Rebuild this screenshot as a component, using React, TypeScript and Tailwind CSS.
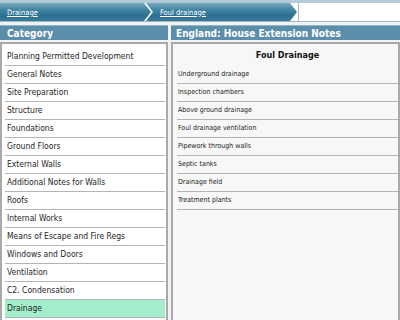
import React from 'react';

const categories = [
  'Planning Permitted Development',
  'General Notes',
  'Site Preparation',
  'Structure',
  'Foundations',
  'Ground Floors',
  'External Walls',
  'Additional Notes for Walls',
  'Roofs',
  'Internal Works',
  'Means of Escape and Fire Regs',
  'Windows and Doors',
  'Ventilation',
  'C2. Condensation',
  'Drainage',
];

const notes = [
  'Underground drainage',
  'Inspection chambers',
  'Above ground drainage',
  'Foul drainage ventilation',
  'Pipework through walls',
  'Septic tanks',
  'Drainage field',
  'Treatment plants',
];

const segBg = 'bg-[linear-gradient(to_bottom,#79abc2_0%,#4586a4_35%,#2c6f90_70%,#377a99_100%)]';

export default function App() {
  return (
    <div className="w-[400px] h-[320px] overflow-hidden bg-[#f2f2f2] font-['DejaVu_Sans_Condensed','Liberation_Sans',sans-serif]">
      {/* Breadcrumbs */}
      <div className="bg-[#b3cbd6] pt-[3px]">
        <div className="flex h-[19px] bg-white border-b border-[#9fb8c4]">
          <div className={`w-[151px] h-full flex items-center pl-[7px] pt-[1px] ${segBg} [clip-path:polygon(0_0,calc(100%-7px)_0,100%_50%,calc(100%-7px)_100%,0_100%)]`}>
            <a href="#" className="text-[7.5px] text-white underline leading-none">Drainage</a>
          </div>
          <div className={`-ml-[5px] w-[151px] h-full flex items-center pl-[14px] pt-[1px] ${segBg} [clip-path:polygon(0_0,calc(100%-7px)_0,100%_50%,calc(100%-7px)_100%,0_100%,7px_50%)]`}>
            <a href="#" className="text-[7.5px] text-white underline leading-none">Foul drainage</a>
          </div>
          <div className="flex-1 ml-[1px] border-l border-[#9fb8c4]" />
        </div>
      </div>

      <div className="flex gap-[3px] pt-[3px]">
        {/* Category column */}
        <div className="w-[168px] flex flex-col">
          <div className="h-[15px] bg-[#5b8eaa] border-t border-[#8fb6c9] flex items-center pl-[7px] text-white font-bold text-[10px]">
            Category
          </div>
          <div className="mt-[2px] h-[300px] bg-white border-2 border-[#a9a9a9] pt-[4px] pl-[3px] pr-[1px]">
            {categories.map((c) => (
              <div
                key={c}
                className={`h-[18px] flex items-center pl-[2px] border-b border-[#b4b4b4] text-[8.5px] text-[#1e1e1e] ${c === 'Drainage' ? 'bg-[#a3efcb]' : ''}`}
              >
                {c}
              </div>
            ))}
          </div>
        </div>

        {/* Notes column */}
        <div className="flex-1 flex flex-col">
          <div className="h-[15px] bg-[#5b8eaa] border-t border-[#8fb6c9] flex items-center pl-[5px] text-white font-bold text-[10px]">
            England: House Extension Notes
          </div>
          <div className="mt-[2px] h-[300px] bg-[#f7f7f7] border-2 border-[#a9a9a9] pl-[4px]">
            <div className="h-[22px] pt-[1px] flex items-center justify-center text-[9px] font-bold text-[#111]">
              Foul Drainage
            </div>
            {notes.map((n) => (
              <div key={n} className="h-[18px] flex items-center pl-[1px] border-b border-[#b4b4b4] text-[7px] text-[#222]">
                {n}
              </div>
            ))}
          </div>
        </div>
      </div>
    </div>
  );
}
